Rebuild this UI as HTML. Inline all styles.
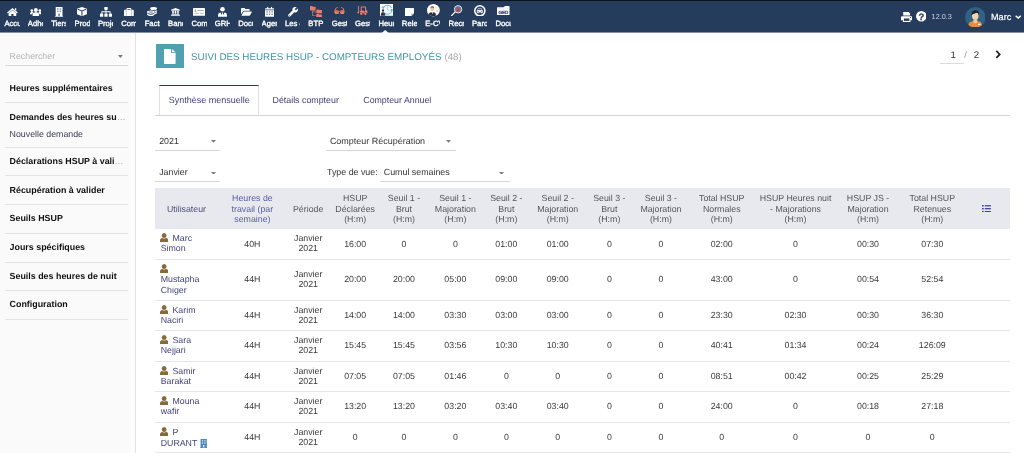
<!DOCTYPE html>
<html lang="fr">
<head>
<meta charset="utf-8">
<title>Suivi des heures HSUP - Compteurs employés</title>
<style>
*{box-sizing:border-box;margin:0;padding:0}
html,body{width:1024px;height:453px;overflow:hidden;background:#fff}
body{font-family:"Liberation Sans",sans-serif;font-size:8.8px;color:#444;position:relative;-webkit-text-size-adjust:none;will-change:transform;text-rendering:geometricPrecision}
/* top bar */
#top{position:absolute;left:0;top:0;width:1024px;height:33px;background:#263c5c;border-top:1.2px solid #0a121c;border-bottom:1px solid #8591a4}
.ni{position:absolute;top:0;width:23.47px;height:31px}
.ni svg{position:absolute}
.lb{position:absolute;left:4.05px;width:15.2px;top:18.1px;height:10px;line-height:10px;overflow:hidden;white-space:nowrap;font-size:7.7px;color:#fff;-webkit-text-stroke:.35px #fff}
#notch{position:absolute;left:381.3px;top:28.5px}
/* sidebar */
#side{position:absolute;left:0;top:32.6px;width:136px;height:421px;background:linear-gradient(90deg,#fafafa 0,#fafafa 129.5px,#fdfdfd 130.5px,#fdfdfd 100%);border-right:1px solid #e2e2e2}
.sep{position:absolute;left:5.1px;width:123px;height:1px;background:#e3e3e3}
.mt{position:absolute;left:9.6px;width:116px;font-weight:bold;color:#111;font-size:8.9px;line-height:11px;white-space:nowrap;overflow:hidden;text-overflow:ellipsis}
.el{color:#aaa;font-weight:normal}
.ms{position:absolute;left:9.6px;color:#3a3a55;font-size:8.8px;line-height:11px;white-space:nowrap}
/* main */
#main{position:absolute;left:136px;top:32.6px;width:888px;height:421px;background:#fff}
.abs{position:absolute;white-space:nowrap}
.sel{position:absolute;height:1px;background:#d6d6d6}
.arr{position:absolute}
table{position:absolute;left:155.2px;top:188px;border-collapse:collapse;table-layout:fixed;width:854.5px}
th{background:#e8e9ee;font-weight:normal;color:#55555c;text-align:center;line-height:10.35px;height:40.6px;vertical-align:middle;font-size:8.8px;padding-top:1px}
th.lk{color:#5c5ca2}
th.lk1{color:#4e4e7c}
td{text-align:center;vertical-align:middle;line-height:10.3px;padding-top:.7px;color:#3a3a3a;border-bottom:1px solid #e6e6e6;font-size:8.8px}
td.u{text-align:left;padding-left:5.5px;color:#45437c}
.ui{position:relative;top:1.3px;margin-left:-.6px;margin-right:-.8px}
.bi{position:relative;top:1.4px}
tr.r2 td{height:30.4px}
tr.r1 td{height:30.6px}
tr.r2b td{height:30.4px}
tr.r2c td{height:30.55px}
tr.r2d td{height:30.1px}
tr.r3 td{height:41.2px}

</style>
</head>
<body>
<div id="top">
<div class="ni" style="left:0.35px"><svg style="left:6.4px;top:6.7px" width="10.9" height="8.3" viewBox="0 0 22 17"><path fill="#fff" d="M11 0L22 9.200 20.400 11.300 11 3.500 1.600 11.300 0 9.200zM16 .6h2.800v4.800L16 3zM3.200 10.800L11 4.400l7.800 6.400V17h-5.600v-4.800H8.800V17H3.200z"/></svg><span class="lb">Accueil</span></div>
<div class="ni" style="left:23.73px"><svg style="left:5.87px;top:6.7px" width="11.7" height="8.1" viewBox="0 0 24 16.6"><g fill="#fff"><circle cx="12" cy="4.200" r="4.100"/><path d="M5.400 16.600v-2.600a5.200 5.200 0 0 1 5.200-5.200h2.800a5.200 5.200 0 0 1 5.200 5.200v2.600z"/><circle cx="3.800" cy="5.200" r="2.900"/><circle cx="20.200" cy="5.200" r="2.900"/><path d="M0 13v-1.400a3.200 3.200 0 0 1 3.200-3.200h1.800a3 3 0 0 1 2 .7 6.600 6.600 0 0 0-2.400 3.900zM24 13v-1.400a3.200 3.200 0 0 0-3.200-3.200h-1.800a3 3 0 0 0-2 .7 6.600 6.600 0 0 1 2.400 3.900z"/></g></svg><span class="lb">Adhérents</span></div>
<div class="ni" style="left:47.11px"><svg style="left:7.69px;top:5.9px" width="8.2" height="9.8" viewBox="0 0 16 19.6"><path fill="#fff" d="M1.2 0h13.6v18H16v1.6H0V18h1.2z"/><g fill="#263c5c" opacity=".55"><rect x="4" y="2.6" width="3" height="3"/><rect x="9" y="2.6" width="3" height="3"/><rect x="4" y="7.2" width="3" height="3"/><rect x="9" y="7.2" width="3" height="3"/><rect x="6.2" y="13" width="3.6" height="5"/></g></svg><span class="lb">Tiers</span></div>
<div class="ni" style="left:70.49px"><svg style="left:6.76px;top:6.3px" width="9.9" height="9.2" viewBox="0 0 20 18.6"><path fill="#fff" d="M10 0l10 3.6v11L10 18.6 0 14.600v-11z"/><path fill="none" stroke="#263c5c" stroke-width="2.200" opacity=".95" d="M1.400 4.600l8.600 3.400 8.600-3.400M10 8v9.600"/></svg><span class="lb">Produits</span></div>
<div class="ni" style="left:93.87px"><svg style="left:5.88px;top:5.9px" width="12" height="9.8" viewBox="0 0 24 19.6"><g fill="#fff"><rect x="8.600" y="0" width="6.800" height="6" rx=".8"/><rect x="0" y="13.2" width="6.400" height="6.400" rx=".8"/><rect x="8.800" y="13.2" width="6.400" height="6.400" rx=".8"/><rect x="17.6" y="13.2" width="6.400" height="6.400" rx=".8"/><path d="M11.100 5h1.800v3.600h8.200v5h-1.800v-3.200H12.900v3.200h-1.800v-3.200H4.700v3.200H2.900v-5h8.200z"/></g></svg><span class="lb">Projets</span></div>
<div class="ni" style="left:117.25px"><svg style="left:6.85px;top:6.7px" width="9.8" height="8.3" viewBox="0 0 20 17"><path fill="#fff" d="M6.400 0h7.200a1.300 1.300 0 0 1 1.300 1.300V3.400h3.600A1.500 1.500 0 0 1 20 4.900v10.600a1.500 1.500 0 0 1-1.500 1.500h-17A1.500 1.500 0 0 1 0 15.500V4.900a1.500 1.500 0 0 1 1.500-1.500h3.600V1.300A1.300 1.300 0 0 1 6.400 0zM7 1.900v1.500h6V1.900z"/><path stroke="#263c5c" stroke-width="1" opacity=".6" d="M4.600 3.400v13.600M15.400 3.400v13.600"/></svg><span class="lb">Commerce</span></div>
<div class="ni" style="left:140.63px"><svg style="left:6.62px;top:6.3px" width="10.2" height="9" viewBox="0 0 20.4 18"><g fill="#fff"><ellipse cx="13.4" cy="3" rx="7" ry="3"/><path d="M6.4 5.4c1.300 1.500 3.900 2.300 7 2.300s5.700-.8 7-2.300v2.200c0 1.700-3.100 3-7 3s-7-1.300-7-3z"/><path d="M14 11.600c3.400-.1 5.900-1 6.400-2.400v2.200c0 1.500-2.400 2.700-5.800 3z"/><ellipse cx="7.600" cy="10.200" rx="8.200" ry="3.800" fill="#263c5c"/><ellipse cx="7.600" cy="10.200" rx="7.600" ry="3.100"/><path d="M0 12.700c1.300 1.600 4.200 2.600 7.600 2.600s6.300-1 7.600-2.600v2.300c0 1.700-3.400 3-7.600 3S0 16.700 0 15z"/></g><ellipse cx="7.600" cy="10.200" rx="5" ry="1.500" fill="#263c5c" opacity=".55"/></svg><span class="lb">Facturation</span></div>
<div class="ni" style="left:164.01px"><svg style="left:7.24px;top:7.2px" width="9" height="7.7" viewBox="0 0 18 15.4"><path fill="#fff" d="M9 0l9 3.400v1.800H0V3.400zM2.400 5.600h3.200v6H2.400zM7.400 5.600h3.200v6H7.400zM12.400 5.600h3.200v6h-3.200zM1.200 12h15.600v1.500H1.200zM0 13.900h18v1.500H0z"/></svg><span class="lb">Banques</span></div>
<div class="ni" style="left:187.39px"><svg style="left:5.61px;top:6.9px" width="12" height="7.8" viewBox="0 0 24 15.600"><rect width="24" height="15.600" rx=".8" fill="#fff"/><g fill="#263c5c" opacity=".55"><rect x="3" y="9.800" width="9" height="1.300"/><rect x="14" y="9.800" width="7" height="1.300"/><rect x="9" y="4.200" width="12" height="1.600"/></g><text x="5" y="8" font-size="7" font-weight="bold" fill="#263c5c" opacity=".7" text-anchor="middle" font-family="Liberation Sans,sans-serif">$</text></svg><span class="lb">Compta</span></div>
<div class="ni" style="left:210.77px"><svg style="left:7.43px;top:5.9px" width="9" height="9.8" viewBox="0 0 18 19.600"><g fill="#fff"><circle cx="9" cy="4.600" r="4.600"/><path d="M0 19.600v-3.200a5.200 5.200 0 0 1 4.700-5.200L9 18.200l4.300-7a5.200 5.200 0 0 1 4.700 5.200v3.200z"/><path d="M7.600 11h2.800l-.7 1.600.9 4-1.600 2.400-1.600-2.400.9-4z"/></g></svg><span class="lb">GRH</span></div>
<div class="ni" style="left:234.15px"><svg style="left:6.45px;top:7.0px" width="11" height="7.7" viewBox="0 0 22 15.400"><g fill="#fff"><path d="M0 12.600V1.600A1.600 1.600 0 0 1 1.600 0h5.200l2 2h7A1.600 1.600 0 0 1 17.400 3.600v1.800H6.200a2.400 2.400 0 0 0-2.100 1.200z"/><path d="M4.800 7.800a1.600 1.600 0 0 1 1.400-.8h14.800a.8.800 0 0 1 .7 1.200l-3.600 6.400a1.600 1.600 0 0 1-1.400.8H.8z"/></g></svg><span class="lb">Documents</span></div>
<div class="ni" style="left:257.53px"><svg style="left:7.37px;top:5.9px" width="9.2" height="9.8" viewBox="0 0 18.400 19.600"><path fill="#fff" d="M0 6.400h18.400v11.600a1.600 1.600 0 0 1-1.600 1.600H1.600A1.600 1.600 0 0 1 0 18zM1.600 2.400h2.600V.6a.6.600 0 0 1 .6-.6h1.200a.6.600 0 0 1 .6.600v1.800h5.200V.6a.6.600 0 0 1 .6-.6h1.200a.6.600 0 0 1 .6.600v1.800h2.600A1.600 1.600 0 0 1 18.400 4v1.200H0V4a1.600 1.600 0 0 1 1.600-1.600z"/><g fill="#263c5c" opacity=".55"><rect x="2.600" y="8.400" width="3" height="2.800"/><rect x="7.700" y="8.400" width="3" height="2.800"/><rect x="12.800" y="8.400" width="3" height="2.800"/><rect x="2.600" y="13.200" width="3" height="2.800"/><rect x="7.700" y="13.200" width="3" height="2.800"/><rect x="12.800" y="13.200" width="3" height="2.800"/></g></svg><span class="lb">Agenda</span></div>
<div class="ni" style="left:280.91px"><svg style="left:6.84px;top:5.9px" width="10.2" height="9.8" viewBox="0 0 20.400 19.600"><path fill="#fff" stroke="#fff" stroke-width=".9" stroke-linejoin="round" d="M19.900 3.800a5.600 5.600 0 0 1-7.400 6.400L4.300 18.400a2.200 2.200 0 0 1-3.100-3.100L9.400 7.100A5.600 5.600 0 0 1 16 0.100c.4.100.5.500.2.800L13.400 3.700l.4 2.600 2.600.4 2.800-2.800c.3-.3.700-.2.800.2z"/><circle cx="2.800" cy="16.800" r=".9" fill="#263c5c"/></svg><span class="lb">Les outils</span></div>
<div class="ni" style="left:304.29px"><svg style="left:5.96px;top:4.8px" width="12" height="10.9" viewBox="0 0 24 21.800"><g fill="#ee7a68"><path d="M0 1.200A1.200 1.200 0 0 1 1.200 0h3.400l1.400 1.400h4A1.200 1.200 0 0 1 11.200 2.600v5A1.200 1.200 0 0 1 10 8.800H1.200A1.200 1.200 0 0 1 0 7.600z"/><path d="M12.800 8A1.200 1.200 0 0 1 14 6.800h3.200l1.400 1.400h4.200A1.200 1.200 0 0 1 24 9.400v4a1.200 1.200 0 0 1-1.200 1.200H14a1.200 1.200 0 0 1-1.200-1.200z"/><path d="M12.800 16.200a1.200 1.200 0 0 1 1.200-1.200h3.200l1.400 1.400h4.200a1.200 1.200 0 0 1 1.200 1.200v3a1.200 1.200 0 0 1-1.200 1.200H14a1.200 1.200 0 0 1-1.200-1.200z" transform="translate(0 .6)"/><path d="M4.600 8.800h1.400v2.400h6.800v1.400H6v6.200h6.800v1.400H4.600z"/></g></svg><span class="lb">BTP</span></div>
<div class="ni" style="left:327.67px"><svg style="left:6.33px;top:5.55px" width="10.9" height="7.5" viewBox="0 0 21.800 15"><defs><linearGradient id="gg" x1="0" y1="0" x2="0" y2="1"><stop offset="0" stop-color="#ec6f6f"/><stop offset="1" stop-color="#f08a5a"/></linearGradient></defs><g fill="url(#gg)" stroke="url(#gg)"><circle cx="5.400" cy="10.400" r="4.300" stroke="none"/><circle cx="16.400" cy="10.400" r="4.300" stroke="none"/><path d="M9 9.600q1.900-1.400 3.800 0" fill="none" stroke-width="1.700"/><path d="M1.900 9.400C1.700 4.600 3.200 1.600 6.600 1" fill="none" stroke-width="2" stroke-linecap="round"/><path d="M19.900 9.400C20.100 4.600 18.600 1.600 15.200 1" fill="none" stroke-width="2" stroke-linecap="round"/></g><g fill="#263c5c" opacity=".45"><path d="M3 9.400a2.600 2.200 0 0 1 4.800 0z"/><path d="M14 9.400a2.600 2.200 0 0 1 4.800 0z"/></g></svg><span class="lb">Gestion</span></div>
<div class="ni" style="left:351.05px"><svg style="left:6.2px;top:4.8px" width="10.9" height="9" viewBox="0 0 21.800 18"><g fill="#ee7a68"><rect x="2.200" y="0" width="1.900" height="14.400"/><rect x="0" y="12.600" width="4.100" height="1.700"/><path d="M7.600 .8h9.600a1 1 0 0 1 1 1v6.800h1.600a1 1 0 0 1 1 1v4.800h-1.400a3 3 0 0 0-5.600 0h-2.400a3 3 0 0 0-5.600 0V9.400h1.800zM9.600 2.800v6h2.600l1.800 1.600h2.200V2.800z"/><circle cx="8.600" cy="15.400" r="2.400"/><circle cx="16.600" cy="15.400" r="2.400"/></g></svg><span class="lb">Gestion</span></div>
<div class="ni" style="left:374.43px"><svg style="left:5.32px;top:2.9px" width="13.5" height="11.8" viewBox="0 0 27 23.600"><rect width="27" height="23.600" fill="#fff"/><circle cx="15" cy="11.400" r="9" fill="none" stroke="#62b6e2" stroke-width="2.200" stroke-dasharray="20 5 26 5.500"/><circle cx="15" cy="11.400" r="7" fill="#eef6fb"/><path d="M15 5.600v6l3.600 2" stroke="#9bb" stroke-width="1" fill="none"/><path d="M22.400 9.400l4.200 3-5.400 1.400z" fill="#3aa3d8"/><path d="M6.400 3.400L2 7l5.600 1.400z" fill="#3aa3d8" opacity=".6"/><circle cx="6" cy="13.400" r="2.300" fill="#2a2a30"/><path d="M1.800 23.600v-3.800a3.400 3.400 0 0 1 3.400-3.400h1.600a3.400 3.400 0 0 1 3.400 3.400v3.800z" fill="#34343c"/></svg><span class="lb">Heures sup</span></div>
<div class="ni" style="left:397.81px"><svg style="left:7.44px;top:6.7px" width="9" height="8.3" viewBox="0 0 18 16.600"><path fill="#fff" d="M.8 0h16.400a.8.800 0 0 1 .8.800V11.200l-5.400 5.400H.8a.8.800 0 0 1-.8-.8V.8A.8.800 0 0 1 .8 0z"/><path fill="#263c5c" opacity=".35" d="M12.600 16.600v-4.600a.8.800 0 0 1 .8-.8H18z"/></svg><span class="lb">Releve</span></div>
<div class="ni" style="left:421.19px"><svg style="left:5.81px;top:3.3px" width="12.75" height="12.4" viewBox="0 0 25.500 24.800"><defs><clipPath id="ce"><ellipse cx="12.750" cy="12.400" rx="12.750" ry="12.400"/></clipPath></defs><ellipse cx="12.750" cy="12.400" rx="12.750" ry="12.400" fill="#fff"/><g clip-path="url(#ce)"><path d="M3.600 24.800v-4.400c0-2.400 2.200-4 5-4h4c2.800 0 5 1.600 5 4v4.400z" fill="#2d2f3a"/><path d="M9.200 16.400h3l-1.500 4z" fill="#fff"/><ellipse cx="10.600" cy="10.600" rx="3.300" ry="4" fill="#f0c4a4"/><path d="M7 9.800c-.4-3.400 1.400-5.400 3.800-5.400 2.600 0 4 2 3.400 5.200-.6-1.600-1.600-2.400-3.400-2.400-1.800 0-3 .8-3.800 2.600z" fill="#6b2f26"/><circle cx="19" cy="8" r="2.200" fill="#e8d9a0" opacity=".8"/><circle cx="20" cy="14" r="1.800" fill="#f3b0b0" opacity=".8"/></g></svg><span class="lb">E-CV</span></div>
<div class="ni" style="left:444.57px"><svg style="left:6.63px;top:3.8px" width="11.5" height="11.2" viewBox="0 0 23 22.400"><path d="M1 21.400L8 14.400" stroke="#fff" stroke-width="2.400" stroke-linecap="round"/><circle cx="14.200" cy="8.600" r="7.400" fill="#66749a" stroke="#dfe4ee" stroke-width="2"/><circle cx="14.200" cy="5.800" r="1.800" fill="#e0392b"/><path d="M11.600 13.400v-3a2.600 2.600 0 0 1 5.200 0v3z" fill="#e0392b"/></svg><span class="lb">Recrutement</span></div>
<div class="ni" style="left:467.95px"><svg style="left:6.45px;top:3.65px" width="11.7" height="11.6" viewBox="0 0 23.400 23.200"><ellipse cx="11.700" cy="11.600" rx="11.700" ry="11.600" fill="#fff"/><ellipse cx="11.700" cy="11.600" rx="8.600" ry="8.500" fill="#2f4470"/><path d="M6.600 10.400l1.400-3.200h7.400l1.400 3.200h1v4.800H16.600v1.400h-2.200v-1.400H9v1.400H6.800v-1.400H5.600v-4.800z" fill="#fff"/><path d="M8.600 8.200h6.200l.8 2H7.800z" fill="#2f4470"/><rect x="7" y="11.800" width="2.600" height="1.600" fill="#2f4470"/><rect x="13.800" y="11.800" width="2.600" height="1.600" fill="#2f4470"/></svg><span class="lb">Parc</span></div>
<div class="ni" style="left:491.33px"><svg style="left:6.07px;top:4.65px" width="12.5" height="9.8" viewBox="0 0 25 19.600"><path d="M0 3.600A1 1 0 0 1 1 2.600h12.400l2-2.200A1 1 0 0 1 16.200 0H24a1 1 0 0 1 1 1v17.600a1 1 0 0 1-1 1H1a1 1 0 0 1-1-1z" fill="#fff"/><path d="M0 4.600h25" stroke="#d8dce6" stroke-width=".8"/><text x="12.700" y="15.200" font-size="9.400" font-weight="bold" fill="#2f357e" stroke="#2f357e" stroke-width=".35" text-anchor="middle" font-family="Liberation Sans,sans-serif" letter-spacing="-.2">GED</text></svg><span class="lb">Documents</span></div>
<svg id="notch" width="8.400" height="3.600" viewBox="0 0 8.400 3.600"><path d="M0 3.600L4.200 0l4.200 3.600z" fill="#fff"/></svg>
<svg class="abs" style="left:900.7px;top:10.8px" width="11.3" height="9.9" viewBox="0 0 22.600 19.800"><path fill="#fff" d="M4.400 0h11l2.800 2.800v4.400H4.400zM2 8.400h18.600a2 2 0 0 1 2 2v6h-3.800v3.400H3.800v-3.400H0v-6a2 2 0 0 1 2-2z"/><rect x="5.800" y="13" width="11" height="4.800" fill="#263c5c"/><rect x="6.200" y="1.800" width="9" height="4.600" fill="#263c5c" opacity=".0"/><circle cx="19" cy="11" r="1" fill="#263c5c"/></svg>
<svg class="abs" style="left:915.9px;top:10.3px" width="10.6" height="10.6" viewBox="0 0 21 21"><circle cx="10.500" cy="10.500" r="10.500" fill="#fff"/><text x="10.500" y="17" font-size="18.500" font-weight="bold" text-anchor="middle" fill="#263c5c" stroke="#263c5c" stroke-width=".5" font-family="Liberation Sans,sans-serif">?</text></svg>
<span class="abs" style="left:931.6px;top:11.4px;font-size:7.3px;line-height:9px;color:#cbd0dc">12.0.3</span>
<svg class="abs" style="left:964.7px;top:5.6px" width="20.6" height="20.6" viewBox="0 0 41 41"><defs><clipPath id="ca"><circle cx="20.500" cy="20.500" r="20.500"/></clipPath></defs><circle cx="20.500" cy="20.500" r="20.500" fill="#2f6283"/><g clip-path="url(#ca)"><path d="M7 41v-5c0-4.400 4-7.400 9-7.400h9c5 0 9 3 9 7.400v5z" fill="#ef8a3c"/><path d="M16.500 25h8v5.600l-4 2.400-4-2.400z" fill="#efc9a4"/><ellipse cx="20.500" cy="17.500" rx="6.600" ry="7.800" fill="#f3d3b0"/><path d="M13.400 17c-1-7 2.600-10.600 7.400-10.600 5 0 8.400 3.800 7 10.400-.8-3.400-2.400-5-4.600-5.400-3 1.400-7.400 1.600-9.800 5.600z" fill="#1f2430"/><rect x="26" y="33.500" width="4.600" height="2.200" fill="#fff"/></g></svg>
<span class="abs" style="left:991px;top:10.5px;font-size:9.100px;line-height:10px;color:#fff;-webkit-text-stroke:.2px #fff">Marc</span>
<svg class="abs" style="left:1014.800px;top:13.600000000000001px" width="6.400" height="4" viewBox="0 0 12.800 8"><path d="M1.400 1.400l5 4.800 5-4.800" fill="none" stroke="#fff" stroke-width="2.900"/></svg>
</div>
<div id="side">
<span class="abs" style="left:9.6px;top:18.6px;font-size:8.8px;line-height:10px;color:#b3b3b3">Rechercher</span>
<svg class="arr" style="left:117.900px;top:22.4px" width="4.800" height="3" viewBox="0 0 4.800 3"><path d="M0 0h4.800L2.400 3z" fill="#777"/></svg>
<div class="sep" style="top:32.2px;background:#d9d9d9"></div>
<div class="mt" style="top:50.3px">Heures supplémentaires</div>
<div class="sep" style="top:69.4px"></div>
<div class="mt" style="top:79.0px">Demandes des heures su<span class="el">…</span></div>
<div class="ms" style="top:96.2px">Nouvelle demande</div>
<div class="sep" style="top:114.4px"></div>
<div class="mt" style="top:123.5px">Déclarations HSUP à vali<span class="el">…</span></div>
<div class="sep" style="top:142.9px"></div>
<div class="mt" style="top:152.1px">Récupération à valider</div>
<div class="sep" style="top:171.6px"></div>
<div class="mt" style="top:180.7px">Seuils HSUP</div>
<div class="sep" style="top:200.3px"></div>
<div class="mt" style="top:209.4px">Jours spécifiques</div>
<div class="sep" style="top:229.0px"></div>
<div class="mt" style="top:238.1px">Seuils des heures de nuit</div>
<div class="sep" style="top:257.7px"></div>
<div class="mt" style="top:266.8px">Configuration</div>
<div class="sep" style="top:286.4px"></div>
</div>
<div id="main">
<div class="abs" style="left:20.0px;top:11.4px;width:28.100px;height:24px;background:#4fa1af;border-radius:.5px"></div>
<svg class="abs" style="left:28.4px;top:16.0px" width="11.600" height="15" viewBox="0 0 23.200 30"><path fill="#fff" d="M1.400 0h12.600v6.800a1.400 1.400 0 0 0 1.400 1.400h7.800v20.400a1.400 1.400 0 0 1-1.400 1.400H1.400A1.400 1.400 0 0 1 0 28.600V1.400A1.400 1.400 0 0 1 1.400 0zM15.800 0l7.400 6.400h-7.400z"/></svg>
<span class="abs" style="left:55.0px;top:19.0px;font-size:9.830px;line-height:11px;color:#3f94a5">SUIVI DES HEURES HSUP - COMPTEURS EMPLOYÉS <span style="color:#a9a9a9;font-size:9.600px;margin-left:.3px">(48)</span></span>
<span class="abs" style="left:814.4px;top:17.4px;font-size:9.600px;line-height:11px;color:#333">1</span>
<span class="abs" style="left:828.2px;top:17.4px;font-size:9.600px;line-height:11px;color:#9a9a9a">/</span>
<span class="abs" style="left:837.8px;top:17.4px;font-size:9.600px;line-height:11px;color:#333">2</span>
<div class="sel" style="left:804.4px;top:30.0px;width:23.200px;background:#dcdcdc"></div>
<svg class="abs" style="left:858.6px;top:17.2px" width="6.600" height="8.800" viewBox="0 0 13.200 17.600"><path d="M2.600 1.800l7 7-7 7" fill="none" stroke="#1a1a1a" stroke-width="3.200"/></svg>
<div class="abs" style="left:23.2px;top:52.2px;width:99.800px;height:31.200px;border:1px solid #e0e0e0;border-top:1.400px solid #263c5c;border-bottom:0;background:#fff"></div>
<div class="sel" style="left:19.0px;top:82.4px;width:855px;background:#d4d4d4"></div>
<span class="abs" style="left:32.8px;top:62.2px;line-height:10px;font-size:9px;color:#3d3d78">Synthèse mensuelle</span>
<span class="abs" style="left:136.5px;top:62.2px;line-height:10px;font-size:8.850px;color:#3d3d78">Détails compteur</span>
<span class="abs" style="left:227.3px;top:62.2px;line-height:10px;font-size:8.800px;color:#3d3d78">Compteur Annuel</span>
<span class="abs" style="left:23.2px;top:103.4px;line-height:11px;font-size:8.85px;color:#333">2021</span>
<div class="sel" style="left:18.8px;top:117.2px;width:65.2px"></div>
<svg class="arr" style="left:74.5px;top:107.9px" width="5" height="2.800" viewBox="0 0 5 2.800"><path d="M0 0h5L2.500 2.800z" fill="#7a7a7a"/></svg>
<span class="abs" style="left:23.2px;top:134.3px;line-height:11px;font-size:8.85px;color:#333">Janvier</span>
<div class="sel" style="left:18.8px;top:148.1px;width:65.2px"></div>
<svg class="arr" style="left:74.5px;top:139.0px" width="5" height="2.800" viewBox="0 0 5 2.800"><path d="M0 0h5L2.500 2.800z" fill="#7a7a7a"/></svg>
<span class="abs" style="left:193.9px;top:103.4px;line-height:11px;font-size:8.98px;color:#333">Compteur Récupération</span>
<div class="sel" style="left:190.0px;top:117.2px;width:129.6px"></div>
<svg class="arr" style="left:310.3px;top:107.9px" width="5" height="2.800" viewBox="0 0 5 2.800"><path d="M0 0h5L2.500 2.800z" fill="#7a7a7a"/></svg>
<span class="abs" style="left:191.0px;top:134.3px;line-height:11px;font-size:8.85px;color:#333">Type de vue:</span>
<span class="abs" style="left:247.8px;top:134.3px;line-height:11px;font-size:8.85px;color:#333">Cumul semaines</span>
<div class="sel" style="left:243.7px;top:148.1px;width:130.3px"></div>
<svg class="arr" style="left:363.4px;top:139.1px" width="5" height="2.800" viewBox="0 0 5 2.800"><path d="M0 0h5L2.500 2.800z" fill="#7a7a7a"/></svg>
</div>
<table><colgroup><col style="width:62.6px"><col style="width:69.2px"><col style="width:42.4px"><col style="width:51.6px"><col style="width:46px"><col style="width:56.8px"><col style="width:45.2px"><col style="width:57.6px"><col style="width:45.6px"><col style="width:57.6px"><col style="width:64px"><col style="width:83.6px"><col style="width:61.4px"><col style="width:67.2px"><col style="width:43.7px"></colgroup>
<tr><th class=lk1>Utilisateur</th><th class=lk>Heures de<br>travail (par<br>semaine)</th><th>Période</th><th>HSUP<br>Déclarées<br>(H:m)</th><th>Seuil 1 -<br>Brut<br>(H:m)</th><th>Seuil 1 -<br>Majoration<br>(H:m)</th><th>Seuil 2 -<br>Brut<br>(H:m)</th><th>Seuil 2 -<br>Majoration<br>(H:m)</th><th>Seuil 3 -<br>Brut<br>(H:m)</th><th>Seuil 3 -<br>Majoration<br>(H:m)</th><th>Total HSUP<br>Normales<br>(H:m)</th><th>HSUP Heures nuit<br>- Majorations<br>(H:m)</th><th>HSUP JS -<br>Majoration<br>(H:m)</th><th>Total HSUP<br>Retenues<br>(H:m)</th><th><svg width="9" height="7.400" viewBox="0 0 12.800 10.800" style="position:relative;left:-1.400px;top:.5px"><g fill="#2d3486"><rect x="0" y="0" width="2.200" height="2.200"/><rect x="3.800" y=".3" width="9" height="1.700"/><rect x="0" y="4.300" width="2.200" height="2.200"/><rect x="3.800" y="4.600" width="9" height="1.700"/><rect x="0" y="8.600" width="2.200" height="2.200"/><rect x="3.800" y="8.900" width="9" height="1.700"/></g></svg></th></tr>
<tr class="r1"><td class="u" style="padding-top:0;padding-bottom:2.05px"><svg class="ui" width="8.300" height="9.400" viewBox="0 0 16 17.200" preserveAspectRatio="none"><circle cx="8" cy="4.600" r="4.600" fill="#876a3a"/><path d="M0 17.200v-3c0-3 2-5 4.600-5l1 .4a6.400 6.400 0 0 0 4.800 0l1-.4c2.600 0 4.600 2 4.600 5v3z" fill="#876a3a"/></svg> &nbsp;Marc<br>Simon</td><td style="padding-top:0.95px">40H</td><td style="padding-top:0;padding-bottom:0.55px">Janvier<br>2021</td><td style="padding-top:0.95px">16:00</td><td style="padding-top:0.95px">0</td><td style="padding-top:0.95px">0</td><td style="padding-top:0.95px">01:00</td><td style="padding-top:0.95px">01:00</td><td style="padding-top:0.95px">0</td><td style="padding-top:0.95px">0</td><td style="padding-top:0.95px">02:00</td><td style="padding-top:0.95px">0</td><td style="padding-top:0.95px">00:30</td><td style="padding-top:0.95px">07:30</td><td></td></tr>
<tr class="r3"><td class="u" style="padding-top:0;padding-bottom:2.05px"><svg class="ui" width="8.300" height="9.400" viewBox="0 0 16 17.200" preserveAspectRatio="none"><circle cx="8" cy="4.600" r="4.600" fill="#876a3a"/><path d="M0 17.200v-3c0-3 2-5 4.600-5l1 .4a6.400 6.400 0 0 0 4.800 0l1-.4c2.600 0 4.600 2 4.600 5v3z" fill="#876a3a"/></svg><br>Mustapha<br>Chiger</td><td style="padding-top:0;padding-bottom:1.05px">44H</td><td style="padding-top:0;padding-bottom:1.05px">Janvier<br>2021</td><td style="padding-top:0;padding-bottom:1.05px">20:00</td><td style="padding-top:0;padding-bottom:1.05px">20:00</td><td style="padding-top:0;padding-bottom:1.05px">05:00</td><td style="padding-top:0;padding-bottom:1.05px">09:00</td><td style="padding-top:0;padding-bottom:1.05px">09:00</td><td style="padding-top:0;padding-bottom:1.05px">0</td><td style="padding-top:0;padding-bottom:1.05px">0</td><td style="padding-top:0;padding-bottom:1.05px">43:00</td><td style="padding-top:0;padding-bottom:1.05px">0</td><td style="padding-top:0;padding-bottom:1.05px">00:54</td><td style="padding-top:0;padding-bottom:1.05px">52:54</td><td></td></tr>
<tr class="r2b"><td class="u" style="padding-top:0;padding-bottom:1.55px"><svg class="ui" width="8.300" height="9.400" viewBox="0 0 16 17.200" preserveAspectRatio="none"><circle cx="8" cy="4.600" r="4.600" fill="#876a3a"/><path d="M0 17.200v-3c0-3 2-5 4.600-5l1 .4a6.400 6.400 0 0 0 4.800 0l1-.4c2.600 0 4.600 2 4.600 5v3z" fill="#876a3a"/></svg> &nbsp;Karim<br>Naciri</td><td style="padding-top:0;padding-bottom:1.05px">44H</td><td style="padding-top:0;padding-bottom:0.55px">Janvier<br>2021</td><td style="padding-top:0;padding-bottom:1.05px">14:00</td><td style="padding-top:0;padding-bottom:1.05px">14:00</td><td style="padding-top:0;padding-bottom:1.05px">03:30</td><td style="padding-top:0;padding-bottom:1.05px">03:00</td><td style="padding-top:0;padding-bottom:1.05px">03:00</td><td style="padding-top:0;padding-bottom:1.05px">0</td><td style="padding-top:0;padding-bottom:1.05px">0</td><td style="padding-top:0;padding-bottom:1.05px">23:30</td><td style="padding-top:0;padding-bottom:1.05px">02:30</td><td style="padding-top:0;padding-bottom:1.05px">00:30</td><td style="padding-top:0;padding-bottom:1.05px">36:30</td><td></td></tr>
<tr class="r2b"><td class="u" style="padding-top:0;padding-bottom:2.55px"><svg class="ui" width="8.300" height="9.400" viewBox="0 0 16 17.200" preserveAspectRatio="none"><circle cx="8" cy="4.600" r="4.600" fill="#876a3a"/><path d="M0 17.200v-3c0-3 2-5 4.600-5l1 .4a6.400 6.400 0 0 0 4.800 0l1-.4c2.600 0 4.600 2 4.600 5v3z" fill="#876a3a"/></svg> &nbsp;Sara<br>Nejjari</td><td style="padding-top:0;padding-bottom:1.55px">44H</td><td style="padding-top:0;padding-bottom:1.55px">Janvier<br>2021</td><td style="padding-top:0;padding-bottom:1.55px">15:45</td><td style="padding-top:0;padding-bottom:1.55px">15:45</td><td style="padding-top:0;padding-bottom:1.55px">03:56</td><td style="padding-top:0;padding-bottom:1.55px">10:30</td><td style="padding-top:0;padding-bottom:1.55px">10:30</td><td style="padding-top:0;padding-bottom:1.55px">0</td><td style="padding-top:0;padding-bottom:1.55px">0</td><td style="padding-top:0;padding-bottom:1.55px">40:41</td><td style="padding-top:0;padding-bottom:1.55px">01:34</td><td style="padding-top:0;padding-bottom:1.55px">00:24</td><td style="padding-top:0;padding-bottom:1.55px">126:09</td><td></td></tr>
<tr class="r2c"><td class="u" style="padding-top:0;padding-bottom:1.55px"><svg class="ui" width="8.300" height="9.400" viewBox="0 0 16 17.200" preserveAspectRatio="none"><circle cx="8" cy="4.600" r="4.600" fill="#876a3a"/><path d="M0 17.200v-3c0-3 2-5 4.600-5l1 .4a6.400 6.400 0 0 0 4.800 0l1-.4c2.600 0 4.600 2 4.600 5v3z" fill="#876a3a"/></svg> &nbsp;Samir<br>Barakat</td><td style="padding-top:0;padding-bottom:0.55px">44H</td><td style="padding-top:0;padding-bottom:0.05px">Janvier<br>2021</td><td style="padding-top:0;padding-bottom:0.55px">07:05</td><td style="padding-top:0;padding-bottom:0.55px">07:05</td><td style="padding-top:0;padding-bottom:0.55px">01:46</td><td style="padding-top:0;padding-bottom:0.55px">0</td><td style="padding-top:0;padding-bottom:0.55px">0</td><td style="padding-top:0;padding-bottom:0.55px">0</td><td style="padding-top:0;padding-bottom:0.55px">0</td><td style="padding-top:0;padding-bottom:0.55px">08:51</td><td style="padding-top:0;padding-bottom:0.55px">00:42</td><td style="padding-top:0;padding-bottom:0.55px">00:25</td><td style="padding-top:0;padding-bottom:0.55px">25:29</td><td></td></tr>
<tr class="r2c"><td class="u" style="padding-top:0;padding-bottom:2.55px"><svg class="ui" width="8.300" height="9.400" viewBox="0 0 16 17.200" preserveAspectRatio="none"><circle cx="8" cy="4.600" r="4.600" fill="#876a3a"/><path d="M0 17.200v-3c0-3 2-5 4.600-5l1 .4a6.400 6.400 0 0 0 4.800 0l1-.4c2.600 0 4.600 2 4.600 5v3z" fill="#876a3a"/></svg> &nbsp;Mouna<br>wafir</td><td style="padding-top:0;padding-bottom:1.55px">44H</td><td style="padding-top:0;padding-bottom:1.55px">Janvier<br>2021</td><td style="padding-top:0;padding-bottom:1.55px">13:20</td><td style="padding-top:0;padding-bottom:1.55px">13:20</td><td style="padding-top:0;padding-bottom:1.55px">03:20</td><td style="padding-top:0;padding-bottom:1.55px">03:40</td><td style="padding-top:0;padding-bottom:1.55px">03:40</td><td style="padding-top:0;padding-bottom:1.55px">0</td><td style="padding-top:0;padding-bottom:1.55px">0</td><td style="padding-top:0;padding-bottom:1.55px">24:00</td><td style="padding-top:0;padding-bottom:1.55px">0</td><td style="padding-top:0;padding-bottom:1.55px">00:18</td><td style="padding-top:0;padding-bottom:1.55px">27:18</td><td></td></tr>
<tr class="r2d"><td class="u" style="padding-top:0;padding-bottom:0.05px"><svg class="ui" width="8.300" height="9.400" viewBox="0 0 16 17.200" preserveAspectRatio="none"><circle cx="8" cy="4.600" r="4.600" fill="#876a3a"/><path d="M0 17.200v-3c0-3 2-5 4.600-5l1 .4a6.400 6.400 0 0 0 4.800 0l1-.4c2.600 0 4.600 2 4.600 5v3z" fill="#876a3a"/></svg> &nbsp;P<br>DURANT <svg class="bi" width="7.400" height="9.200" viewBox="0 0 12 15.200"><path d="M.8 0h10.400v14H12v1.200H0V14h.8z" fill="#4c88ba"/><g fill="#fff" opacity=".8"><rect x="3" y="2" width="2" height="2"/><rect x="7" y="2" width="2" height="2"/><rect x="3" y="5.600" width="2" height="2"/><rect x="7" y="5.600" width="2" height="2"/><rect x="4.800" y="10" width="2.400" height="4"/></g></svg></td><td style="padding-top:0;padding-bottom:0.30px">44H</td><td style="padding-top:0;padding-bottom:0.05px">Janvier<br>2021</td><td style="padding-top:0;padding-bottom:0.30px">0</td><td style="padding-top:0;padding-bottom:0.30px">0</td><td style="padding-top:0;padding-bottom:0.30px">0</td><td style="padding-top:0;padding-bottom:0.30px">0</td><td style="padding-top:0;padding-bottom:0.30px">0</td><td style="padding-top:0;padding-bottom:0.30px">0</td><td style="padding-top:0;padding-bottom:0.30px">0</td><td style="padding-top:0;padding-bottom:0.30px">0</td><td style="padding-top:0;padding-bottom:0.30px">0</td><td style="padding-top:0;padding-bottom:0.30px">0</td><td style="padding-top:0;padding-bottom:0.30px">0</td><td></td></tr>
</table>
</body>
</html>
